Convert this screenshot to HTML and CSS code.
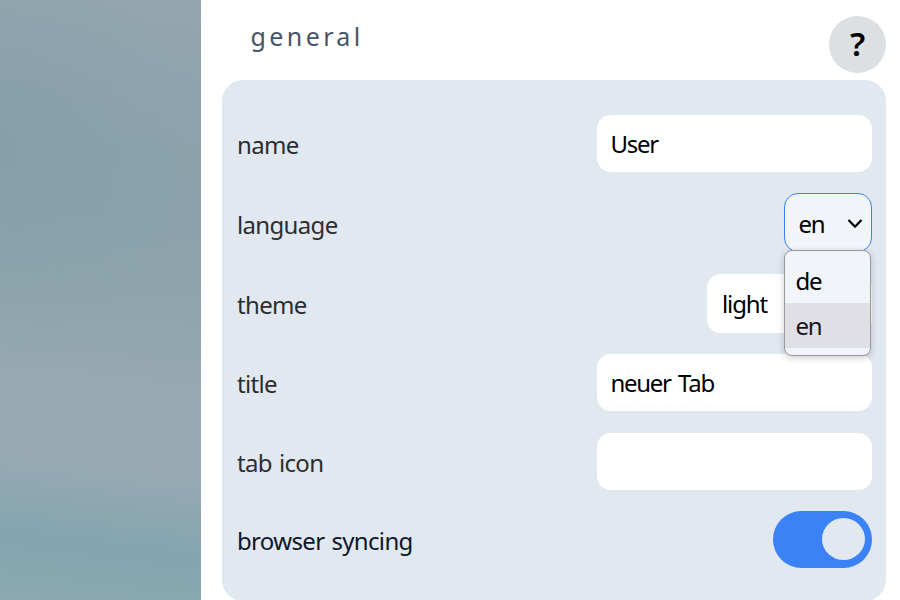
FILE: index.html
```html
<!DOCTYPE html>
<html lang="en">
<head>
<meta charset="utf-8">
<title>neuer Tab</title>
<link rel="stylesheet" href="styles.css">
</head>
<body>
<div class="backdrop"></div>
<main class="settings">
  <header class="header">
    <h1 class="heading">general</h1>
    <button class="help" type="button"><span>?</span></button>
  </header>
  <section class="card">
    <div class="row"><span class="label">name</span><div class="field"><span>User</span></div></div>
    <div class="row">
      <span class="label low">language</span>
      <div class="select open">
        <span>en</span>
        <svg class="chevron" width="16" height="12" viewBox="0 0 16 12"><path d="M1.5 2 8 8.7 14.5 2" fill="none" stroke="#000" stroke-width="2.3"/></svg>
        <div class="menu"><div class="option"><span>de</span></div><div class="option selected"><span>en</span></div></div>
      </div>
    </div>
    <div class="row"><span class="label low">theme</span><div class="select theme"><span>light</span></div></div>
    <div class="row"><span class="label">title</span><div class="field"><span>neuer Tab</span></div></div>
    <div class="row"><span class="label low">tab icon</span><div class="field"></div></div>
    <div class="row"><span class="label low strong">browser syncing</span><div class="toggle"><div class="knob"></div></div></div>
  </section>
</main>
</body>
</html>
```
FILE: styles.css
```css
* { box-sizing: border-box; }
body {
  margin: 0;
  width: 900px;
  height: 600px;
  overflow: hidden;
  display: flex;
  background: #fff;
  font-family: "Noto Sans", "Open Sans", sans-serif;
  font-size: 24px;
}
.backdrop {
  width: 201px;
  height: 600px;
  background:
    radial-gradient(ellipse 190px 220px at 0 150px, rgba(126, 156, 168, .4), transparent),
    linear-gradient(187deg, #94a6ae 0, #8fa3ae 14%, #8ba2ab 26%, #8ba2ac 36%, #8fa5ac 50%, #96a8b1 62%, #97aab3 77%, #8ba6b1 84%, #84a5b0 89%, #86a7b0 94%, #8da8b1 100%);
}
.settings { flex: 1; padding: 0 14px 0 21px; }
.header { height: 80px; display: flex; justify-content: space-between; padding-top: 15px; }
.heading {
  margin: 0 0 0 28.5px;
  font-size: 25px;
  font-weight: 400;
  line-height: 42px;
  letter-spacing: 3.4px;
  color: #475569;
}
.help {
  width: 57px;
  height: 57px;
  margin-top: 1px;
  border: 0;
  border-radius: 50%;
  padding: 0 0 1px;
  background: #dce0e3;
  color: #000;
  font: 600 33px/56px "Noto Sans", sans-serif;
}
.card {
  height: 521px;
  padding: 35px 14px 0 15px;
  border-radius: 21px;
  background: #e1e8f0;
  display: flex;
  flex-direction: column;
  gap: 21.4px;
}
.row { display: flex; justify-content: space-between; align-items: center; }
.label { color: #2d2d2d; padding-top: 2px; line-height: 34px; letter-spacing: -.66px; word-spacing: 1.4px; }
.low { padding-top: 4px; }
.strong { color: #0f172a; }
.field, .select { background: #fff; border-radius: 14px; color: #000; line-height: 57px; letter-spacing: -1.3px; word-spacing: 2.5px; }
.field { width: 275px; height: 57px; padding-left: 13.5px; }
.select { height: 59px; padding-left: 15px; line-height: 59px; }
.theme { width: 165px; letter-spacing: -1.1px; }
.open {
  position: relative;
  width: 88px;
  border: 1px solid #3b82f6;
  background: #f1f5f9;
  padding: 2px 8px 0 13.5px;
  display: flex;
  justify-content: space-between;
  align-items: center;
}
.menu {
  position: absolute;
  z-index: 2;
  left: -1px;
  top: 56px;
  width: 87px;
  height: 106px;
  padding: 7px 0;
  border: 1px solid #999;
  border-radius: 8px;
  background: #f1f5f9;
  box-shadow: 0 2px 7px rgba(0, 0, 0, .2);
}
.option { height: 45px; line-height: 45px; padding-left: 10.5px; }
.selected { background: #e0dfe5; color: #15151e; }
.toggle {
  width: 99px;
  height: 57px;
  padding: 7px;
  border-radius: 29px;
  background: #3b82f6;
  display: flex;
  justify-content: flex-end;
}
.knob { width: 43px; height: 42px; border-radius: 50%; background: #e1e8f0; }
```
